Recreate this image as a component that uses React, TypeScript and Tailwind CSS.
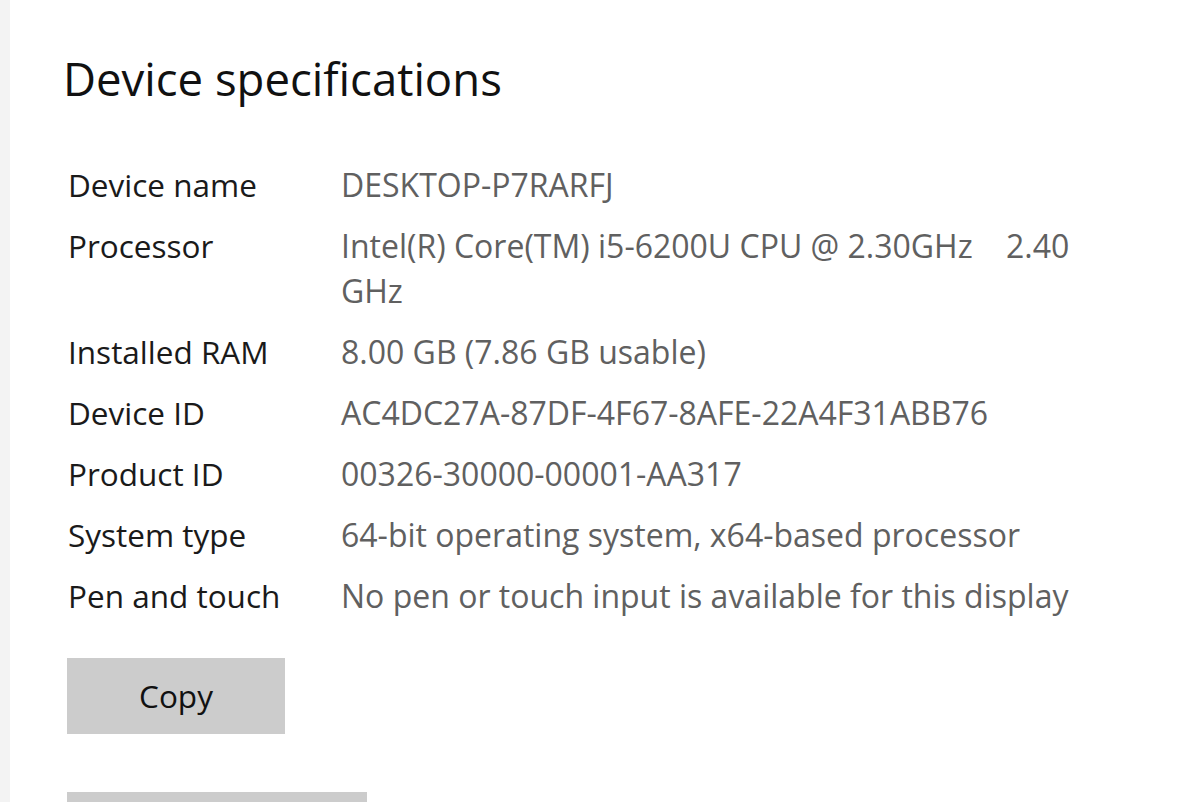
import React from 'react'

const specs: { label: string; value: React.ReactNode }[] = [
  { label: 'Device name', value: 'DESKTOP-P7RARFJ' },
  {
    label: 'Processor',
    value: (
      <>
        Intel(R) Core(TM) i5-6200U CPU @ 2.30GHz&nbsp;&nbsp;&nbsp;&nbsp;2.40
        <br />
        GHz
      </>
    ),
  },
  { label: 'Installed RAM', value: '8.00 GB (7.86 GB usable)' },
  { label: 'Device ID', value: 'AC4DC27A-87DF-4F67-8AFE-22A4F31ABB76' },
  { label: 'Product ID', value: '00326-30000-00001-AA317' },
  { label: 'System type', value: '64-bit operating system, x64-based processor' },
  { label: 'Pen and touch', value: 'No pen or touch input is available for this display' },
]

export default function App() {
  return (
    <div
      className="flex h-[802px] w-[1200px] overflow-hidden bg-white"
      style={{ fontFamily: '"Open Sans", "Noto Sans", sans-serif' }}
    >
      {/* nav pane edge */}
      <div className="w-[10px] shrink-0 bg-[#f3f3f3]" />

      <div className="flex-1 pl-[53px] pt-[48px]">
        <h1 className="text-[45.5px] leading-[60px] font-normal text-[#111]">Device specifications</h1>

        <div className="mt-[54px] ml-[5px] flex flex-col gap-[16px]">
          {specs.map((s) => (
            <div key={s.label} className="grid grid-cols-[273px_1fr] leading-[45px]">
              <div className="text-[31.5px] text-[#1a1a1a]">{s.label}</div>
              <div className="text-[32px] text-[#606060]">{s.value}</div>
            </div>
          ))}
        </div>

        <div className="ml-[4px] mt-[40px] flex flex-col gap-[58px]">
          <button className="h-[76px] w-[218px] bg-[#cccccc] text-[31.5px] text-[#111]">Copy</button>
          <button aria-label="Rename this PC" className="h-[76px] w-[300px] bg-[#cccccc]" />
        </div>
      </div>
    </div>
  )
}
